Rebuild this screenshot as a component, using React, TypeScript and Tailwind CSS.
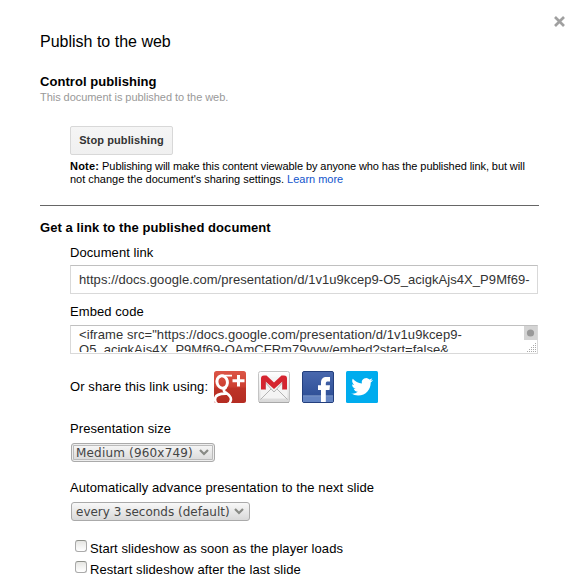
import type { ReactNode } from "react";

function Label({ children }: { children: ReactNode }) {
  return <div className="h-4 whitespace-nowrap text-[13px] leading-4 tracking-[0.08px]">{children}</div>;
}

function GooglePlusIcon() {
  return (
    <svg width="32" height="32" viewBox="0 0 32 32" aria-label="Google+">
      <defs>
        <linearGradient id="gplus" x1="0" y1="0" x2="0" y2="1">
          <stop offset="0" stopColor="#dc5647" />
          <stop offset="0.48" stopColor="#cd4032" />
          <stop offset="0.55" stopColor="#bd3327" />
          <stop offset="1" stopColor="#b42c22" />
        </linearGradient>
        <clipPath id="gplusClip">
          <rect width="32" height="32" rx="2.5" />
        </clipPath>
      </defs>
      <rect width="32" height="32" rx="2.5" fill="url(#gplus)" />
      <g fill="none" stroke="#fff" clipPath="url(#gplusClip)">
        <ellipse cx="8.2" cy="11" rx="5.2" ry="6.2" strokeWidth="3" transform="rotate(-14 8.2 11)" />
        <path d="M7.5 4.6H18" strokeWidth="1.6" />
        <path d="M12.5 16C9.5 18.3 9 19.4 11 21C14.5 23.5 17 25 17 28.2C17 32 13 34 8 34C3.5 34 1 31.5 1 28.5C1 24.6 5 22.6 11.5 22.6" strokeWidth="2.6" />
        <path d="M18.5 9.8H30.5M24.5 4V15.6" strokeWidth="3" />
      </g>
    </svg>
  );
}

function GmailIcon() {
  return (
    <svg width="32" height="32" viewBox="0 0 32 32" aria-label="Gmail">
      <defs>
        <linearGradient id="gmail" x1="0" y1="0" x2="0" y2="1">
          <stop offset="0" stopColor="#fff" />
          <stop offset="1" stopColor="#d8d8d8" />
        </linearGradient>
      </defs>
      <rect x="0.5" y="0.5" width="31" height="31" rx="2" fill="url(#gmail)" stroke="#c4c4c4" />
      <path d="M1 31.5H31" stroke="#a9a9a9" />
      <path d="M2.5 6H29.5V27.5H2.5Z" fill="#f4f4f4" />
      <path d="M2.5 28.5L13 18M29.5 28.5L19 18M5 9L16 21L27 9" fill="none" stroke="#b4b4b4" />
      <path d="M3 18.5V7.5Q3 4.5 6 4.5H8.5L16 11.5L23.5 4.5H26Q29 4.5 29 7.5V18.5H24.5V10.5L16 18L7.5 10.5V18.5Z" fill="#d5242f" />
      <path d="M7.5 10.5V18.5M24.5 10.5V18.5" fill="none" stroke="#a81a25" strokeWidth="0.5" />
    </svg>
  );
}

function FacebookIcon() {
  return (
    <svg width="32" height="32" viewBox="0 0 32 32" aria-label="Facebook">
      <defs>
        <linearGradient id="facebook" x1="0" y1="0" x2="0" y2="1">
          <stop offset="0" stopColor="#4968ae" />
          <stop offset="1" stopColor="#294a91" />
        </linearGradient>
      </defs>
      <rect x="0.5" y="0.5" width="31" height="31" rx="1.5" fill="url(#facebook)" stroke="#233f7d" />
      <path d="M1 25H31V31H1Z" fill="#6383c1" />
      <path d="M1 24.8H31" stroke="#8da4d1" strokeWidth="0.8" />
      <path d="M19 31V19H16V14.3H19V11.8C19 7.8 21 6 24.5 6H28V10.4H26C24.4 10.4 23.8 11 23.8 12.6V14.3H28L27.5 19H23.8V31Z" fill="#fff" />
    </svg>
  );
}

function TwitterIcon() {
  return (
    <svg width="32" height="32" viewBox="0 0 32 32" aria-label="Twitter">
      <rect width="32" height="32" rx="1.5" fill="#00acee" />
      <g transform="translate(5.3 5) scale(.9)">
        <path fill="#fff" d="M23.953 4.57a10 10 0 01-2.825.775 4.958 4.958 0 002.163-2.723c-.951.555-2.005.959-3.127 1.184a4.92 4.92 0 00-8.384 4.482C7.69 8.095 4.067 6.13 1.64 3.162a4.822 4.822 0 00-.666 2.475c0 1.71.87 3.213 2.188 4.096a4.904 4.904 0 01-2.228-.616v.06a4.923 4.923 0 003.946 4.827 4.996 4.996 0 01-2.212.085 4.936 4.936 0 004.604 3.417 9.867 9.867 0 01-6.102 2.105c-.39 0-.779-.023-1.17-.067a13.995 13.995 0 007.557 2.209c9.053 0 13.998-7.496 13.998-13.985 0-.21 0-.42-.015-.63A9.935 9.935 0 0024 4.59z" />
      </g>
    </svg>
  );
}

function Chevron() {
  return (
    <svg width="10" height="7" viewBox="0 0 10 7" className="shrink-0">
      <path d="M1 1L5 5L9 1" fill="none" stroke="#888a85" strokeWidth="2.2" />
    </svg>
  );
}

function Checkbox({ label }: { label: string }) {
  return (
    <div className="flex h-[21px] pl-[5px]">
      <span className="mt-px h-3 w-3 shrink-0 rounded-[3px] border border-[#aaa] border-t-[#8d8f89] bg-gradient-to-b from-[#e6e6e3] to-white" />
      <span className="ml-[3px] mt-[2px] whitespace-nowrap text-[13px] leading-4 tracking-[0.07px]">{label}</span>
    </div>
  );
}

export default function App() {
  return (
    <main
      className="relative h-[577px] w-[566px] overflow-hidden bg-white pl-10 pt-8 text-black"
      style={{ fontFamily: '"Liberation Sans", Arial, sans-serif' }}
    >
      <button aria-label="Close" className="absolute left-[554px] top-4">
        <svg width="12" height="12" viewBox="0 0 12 12">
          <path d="M1 1L10 10M10 1L1 10" stroke="#a0a0a0" strokeWidth="2.7" />
        </svg>
      </button>
      <h1 className="h-5 text-base leading-5">Publish to the web</h1>
      <h2 className="mt-[22px] text-[13px] font-bold leading-4 tracking-[0.06px]">Control publishing</h2>
      <p className="text-[11px] leading-[14px] tracking-[-0.05px] text-[#999]">This document is published to the web.</p>
      <section className="ml-[30px] mt-[22px]">
        <button className="flex h-[29px] w-[103px] items-center justify-center whitespace-nowrap rounded-[2px] border border-[#d8d8d8] bg-gradient-to-b from-[#f5f5f5] to-[#f0f0f0] text-[11px] font-bold tracking-[0.1px] text-[#333]">
          Stop publishing
        </button>
        <p className="mt-[5px] whitespace-nowrap text-[11px] leading-[13px]">
          <b className="tracking-[0.2px]">Note:</b>
          <span className="tracking-[-0.08px]"> Publishing will make this content viewable by anyone who has the published link, but will</span>
          <br />
          <span className="tracking-[-0.02px]">not change the document's sharing settings. <a className="text-[#1155cc]">Learn more</a></span>
        </p>
      </section>
      <hr className="mt-[19px] w-[499px] border-t border-[#666]" />
      <h2 className="mt-[14px] text-[13px] font-bold leading-4 tracking-[0.07px]">Get a link to the published document</h2>
      <section className="ml-[30px] mt-[9px]">
        <Label>Document link</Label>
        <div className="mt-1 flex h-[29px] w-[468px] items-center overflow-hidden whitespace-nowrap border border-[#d9d9d9] border-t-[#c0c0c0] px-2 text-[13px] tracking-[0.057px] text-[#333]">
          https://docs.google.com/presentation/d/1v1u9kcep9-O5_acigkAjs4X_P9Mf69-
        </div>
        <div className="mt-[10px]">
          <Label>Embed code</Label>
        </div>
        <div className="mt-[5px] flex h-[29px] w-[468px] justify-between border border-[#d9d9d9] border-t-[#c0c0c0] pl-2">
          <div className="mt-px h-[25px] overflow-hidden whitespace-nowrap text-[13px] leading-[15px] text-[#333]">
            <span className="tracking-[0.075px]">{'<iframe src="https://docs.google.com/presentation/d/1v1u9kcep9-'}</span>
            <br />
            <span className="tracking-[0.02px]">{"O5_acigkAjs4X_P9Mf69-OAmCFRm79vvw/embed?start=false&"}</span>
          </div>
          <svg width="13" height="27" viewBox="0 0 13 27">
            <rect width="13" height="14" fill="#d4d4d4" />
            <circle cx="6.5" cy="7" r="3.6" fill="#999" />
            <path d="M11 17h1v1h-1zM9 19h1v1H9zM11 19h1v1h-1zM7 21h1v1H7zM9 21h1v1H9zM11 21h1v1h-1zM5 23h1v1H5zM7 23h1v1H7zM9 23h1v1H9zM11 23h1v1h-1zM3 25h1v1H3zM5 25h1v1H5zM7 25h1v1H7zM9 25h1v1H9zM11 25h1v1h-1z" fill="#aaa" />
          </svg>
        </div>
        <div className="mt-[17px] flex h-8 items-center">
          <span className="w-36 whitespace-nowrap text-[13px] leading-4 tracking-[0.09px]">Or share this link using:</span>
          <div className="flex gap-3">
            <GooglePlusIcon />
            <GmailIcon />
            <FacebookIcon />
            <TwitterIcon />
          </div>
        </div>
        <div className="mt-[18px]">
          <Label>Presentation size</Label>
        </div>
        <button className="ml-px mt-[6px] flex h-[19px] w-36 items-center justify-between whitespace-nowrap rounded-[3px] border border-[#aaa] bg-gradient-to-b from-[#f8f8f8] to-[#d9d9d9] pl-1 pr-[5px] text-[12px] tracking-[0.18px] text-[#444] shadow-[inset_0_0_0_1px_#eee,inset_0_0_0_2px_#bbb]" style={{ fontFamily: '"DejaVu Sans", sans-serif' }}>
          Medium (960x749)
          <Chevron />
        </button>
        <div className="mt-[18px]">
          <Label>Automatically advance presentation to the next slide</Label>
        </div>
        <button className="ml-px mt-[6px] flex h-[19px] w-[179px] items-center justify-between whitespace-nowrap rounded-[3px] border border-[#aaa] bg-gradient-to-b from-[#f8f8f8] to-[#d9d9d9] pl-1 pr-[5px] text-[12px] text-[#444]" style={{ fontFamily: '"DejaVu Sans", sans-serif' }}>
          every 3 seconds (default)
          <Chevron />
        </button>
        <div className="mt-[18px]">
          <Checkbox label="Start slideshow as soon as the player loads" />
          <Checkbox label="Restart slideshow after the last slide" />
        </div>
      </section>
    </main>
  );
}
